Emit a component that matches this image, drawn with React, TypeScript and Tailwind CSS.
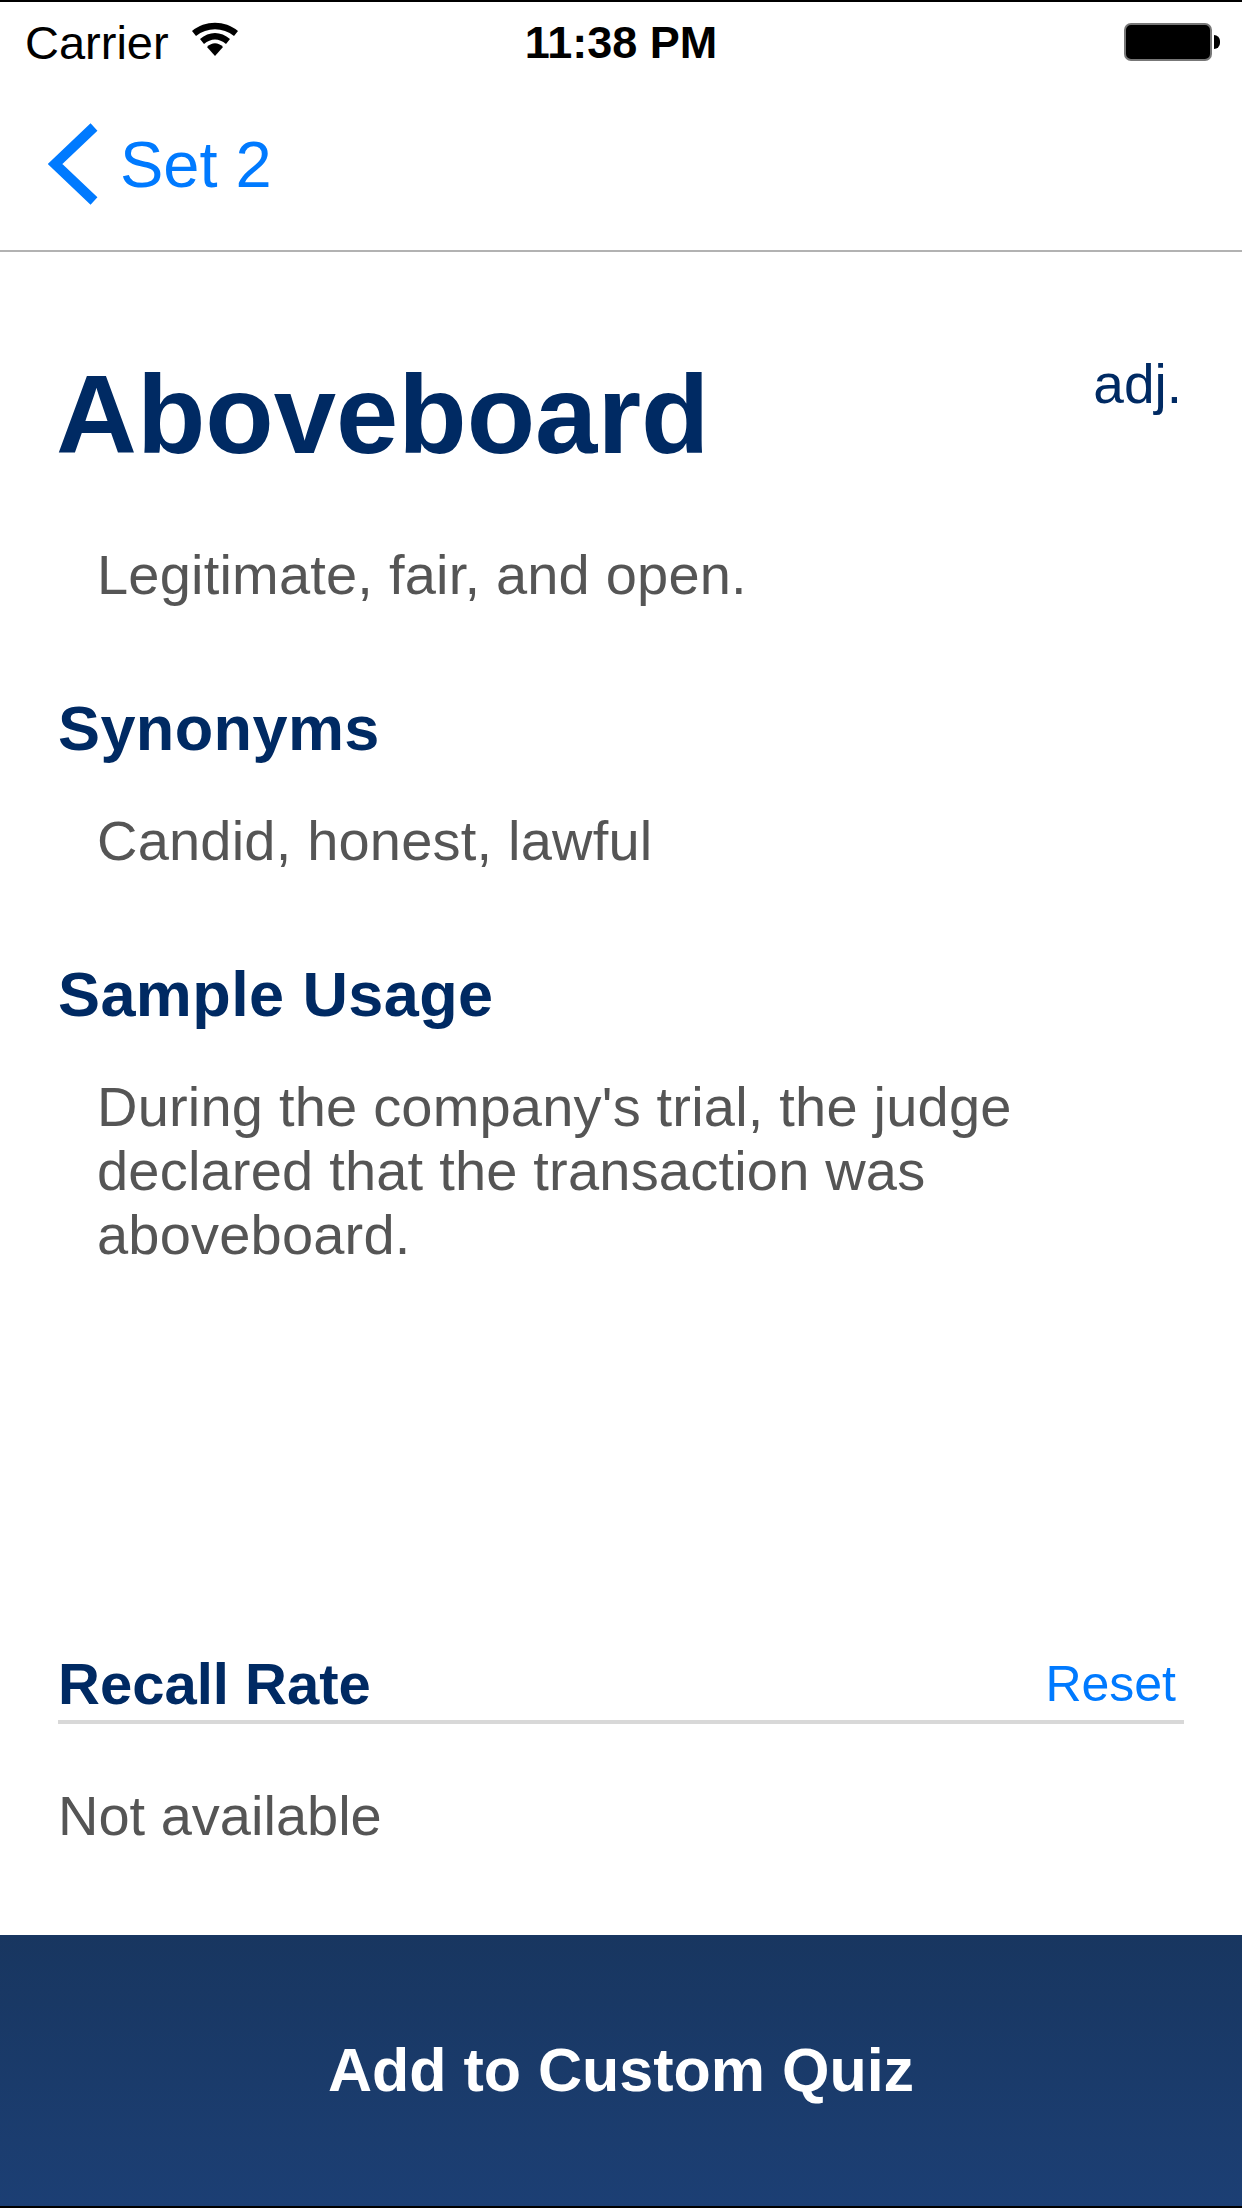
import React from "react";

const sans = "font-['Liberation_Sans',Arial,sans-serif]";

const StatusBar = () => (
  <div className="relative flex h-[86px] items-center border-t-2 border-black pb-[4px] pl-[25px] pr-[22px]">
    <span className="text-[47px] leading-none text-black">Carrier</span>
    <svg className="mb-[6px] ml-[22px]" width="48" height="36" viewBox="0 0 48 36">
      <path d="M1 10 C14 -1 34 -1 47 10 L43 15 C32 6 16 6 5 15 Z" fill="#000" />
      <path d="M9 18 C18 10 30 10 39 18 L35 23 C28 17 20 17 13 23 Z" fill="#000" />
      <path d="M16 26 C21 21 27 21 32 26 L24 35 Z" fill="#000" />
    </svg>
    <span className="absolute left-0 right-0 text-center text-[45px] font-bold leading-none text-black">11:38 PM</span>
    <div className="ml-auto flex items-center">
      <div className="h-[38px] w-[88px] rounded-[7px] border-2 border-[#777] bg-black" />
      <div className="ml-[2px] h-[14px] w-[6px] rounded-r-full bg-black" />
    </div>
  </div>
);

const NavBar = () => (
  <div className="flex h-[166px] items-center border-b-2 border-[#b2b2b2] pb-[8px] pl-[48px]">
    <svg width="50" height="82" viewBox="0 0 50 82">
      <path d="M46 4 L7 41 L46 78" fill="none" stroke="#007aff" strokeWidth="10" />
    </svg>
    <span className="ml-[22px] text-[65px] leading-none text-[#007aff]">Set 2</span>
  </div>
);

const Section = ({ title, children }: { title: string; children: React.ReactNode }) => (
  <div className="mt-[85px]">
    <h2 className="text-[63px] font-bold leading-[72px] tracking-[0.4px] text-[#002a63]">{title}</h2>
    <p className="mt-[45px] pl-[39px] text-[56px] leading-[64px] tracking-[0.2px] text-[#555555]">{children}</p>
  </div>
);

export default function App() {
  return (
    <div className={`${sans} flex h-[2208px] w-[1242px] flex-col bg-white`}>
      <StatusBar />
      <NavBar />

      <main className="flex flex-1 flex-col px-[58px]">
        <div className="flex items-start justify-between pt-[113px]">
          <h1 className="ml-[-2px] text-[112px] font-bold leading-[100px] text-[#002a63]">Aboveboard</h1>
          <span className="mr-[2px] mt-[-11px] text-[55px] leading-[60px] text-[#002a63]">adj.</span>
        </div>
        <p className="mt-[78px] pl-[39px] text-[56px] leading-[64px] tracking-[0.2px] text-[#555555]">Legitimate, fair, and open.</p>

        <Section title="Synonyms">Candid, honest, lawful</Section>
        <Section title="Sample Usage">
          During the company's trial, the judge declared that the transaction was aboveboard.
        </Section>

        <div className="mt-auto pb-[87px]">
          <div className="flex items-center justify-between border-b-4 border-[#d8d8d8] pb-[3px]">
            <h2 className="text-[58px] font-bold leading-[66px] text-[#002a63]">Recall Rate</h2>
            <span className="mr-[8px] text-[50px] leading-[66px] text-[#007aff]">Reset</span>
          </div>
          <p className="mt-[60px] text-[56px] leading-[64px] text-[#555555]">Not available</p>
        </div>
      </main>

      <button className="flex h-[273px] shrink-0 items-center justify-center border-b-2 border-black bg-gradient-to-b from-[#183660] to-[#1c3f74] text-[61px] font-bold text-white">
        Add to Custom Quiz
      </button>
    </div>
  );
}
